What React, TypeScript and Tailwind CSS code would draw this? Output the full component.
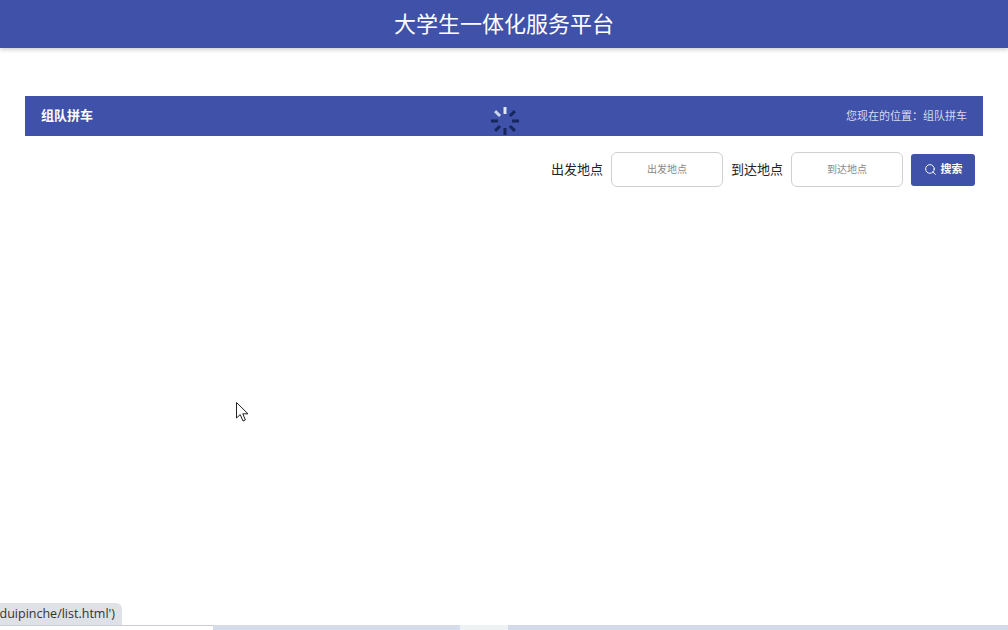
import { Search } from "lucide-react";

const cjk = "font-['Liberation_Sans','Noto_Sans_CJK_SC',sans-serif]";

const Field = ({ label }: { label: string }) => (
    <div className="flex items-center gap-2">
        <span className="text-[13px] text-[#222]">{label}</span>
        <input
            placeholder={label}
            className="w-[112px] h-[35px] rounded-[6px] border border-[#d0d0d0] bg-white text-center text-[10px] outline-none placeholder:text-[#888]"
        />
    </div>
);

// loading spinner that sits over the title bar
const Spinner = () => {
    const spokes = [
        { a: 0, c: "#dfe6f5" },
        { a: 45, c: "#16265e" },
        { a: 90, c: "#16265e" },
        { a: 135, c: "#16265e" },
        { a: 180, c: "#16265e" },
        { a: 225, c: "#16265e" },
        { a: 270, c: "#16265e" },
        { a: 315, c: "#c9d4ee" },
    ];
    return (
        <svg width="30" height="30" viewBox="0 0 30 30" className="absolute left-[490px] top-[106px]">
            {spokes.map((s) => (
                <line
                    key={s.a}
                    x1="15"
                    y1="8"
                    x2="15"
                    y2="1"
                    stroke={s.c}
                    strokeWidth="3"
                    transform={`rotate(${s.a} 15 15)`}
                />
            ))}
        </svg>
    );
};

const Cursor = () => (
    <svg width="13" height="20" viewBox="0 0 13 20" className="absolute left-[236px] top-[402px]">
        <path d="M0.5 0.5V16L4.2 12.6L7 19L9.4 18L6.8 11.8H12L0.5 0.5Z" fill="white" stroke="#222" strokeWidth="1" />
    </svg>
);

export default function App() {
    return (
        <div className={`relative flex h-[630px] w-[1008px] flex-col overflow-hidden bg-white ${cjk}`}>
            <header className="flex h-12 items-center justify-center bg-[#3f51a8] text-[22px] text-white shadow-[0_2px_4px_rgba(0,0,0,0.18)]">
                大学生一体化服务平台
            </header>

            <main className="flex-1 px-[25px] pt-12">
                <div className="flex h-10 items-center justify-between bg-[#3f51a8] px-4 text-white">
                    <span className="text-[13px] font-bold">组队拼车</span>
                    <span className="text-[11px] text-[#d5daf0]">您现在的位置：组队拼车</span>
                </div>

                <div className="flex items-center justify-end gap-2 pr-2 pt-4">
                    <Field label="出发地点" />
                    <Field label="到达地点" />
                    <button className="flex h-8 w-16 items-center justify-center gap-1 rounded-[3px] bg-[#3f51a8] text-[11px] font-bold text-white">
                        <Search size={13} strokeWidth={1.75} />
                        搜索
                    </button>
                </div>
            </main>

            <footer className="flex h-[5px]">
                <div className="w-[213px] border-t border-[#c9ccd2] bg-white" />
                <div className="w-[247px] bg-[#d5dcea]" />
                <div className="w-12 bg-[#eef2f3]" />
                <div className="flex-1 bg-[#d3daea]" />
            </footer>

            <Spinner />
            <Cursor />

            <div className="absolute bottom-[5px] left-0 flex h-[22px] w-[122px] items-center justify-end rounded-tr-[6px] bg-[#dee1e6] pr-[7px] font-['Open_Sans',sans-serif] text-[12.5px] text-[#333]">
                duipinche/list.html')
            </div>
        </div>
    );
}
